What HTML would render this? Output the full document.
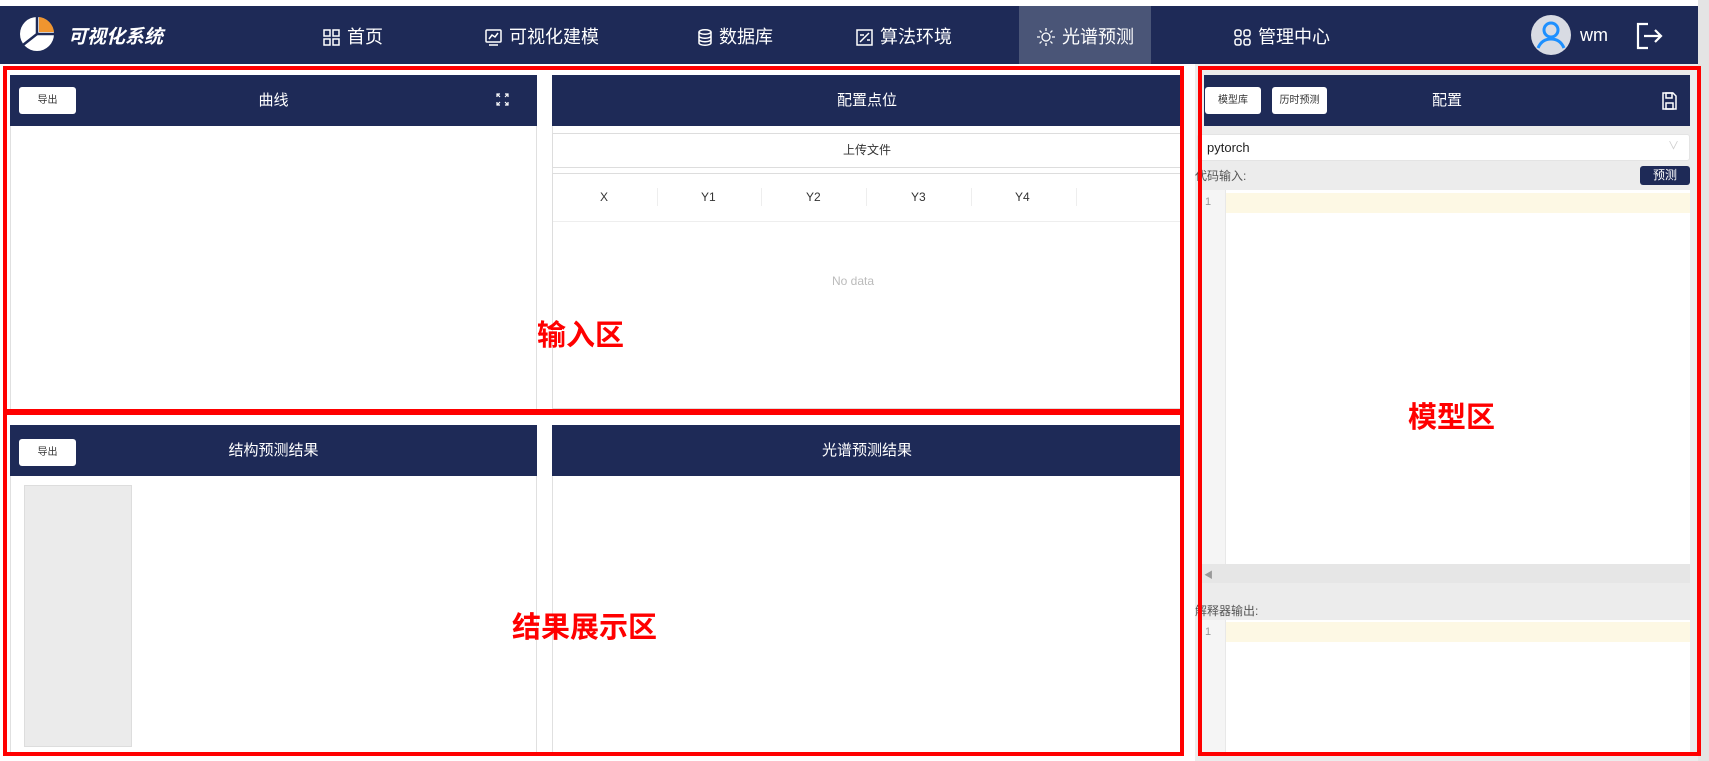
<!DOCTYPE html>
<html><head><meta charset="utf-8"><style>
*{box-sizing:border-box;margin:0;padding:0}
body{width:1709px;height:761px;overflow:hidden;background:#fff;font-family:"Liberation Sans","Noto Sans CJK SC",sans-serif;position:relative}
.a{position:absolute}
.nav{left:0;top:6px;width:1698px;height:58px;background:#1e2a57;color:#fff}
.ni{position:absolute;top:2px;height:58px;line-height:58px;font-size:18px;color:#fff;display:flex;align-items:center;gap:7px}
.hd{background:#1e2a57;color:#fff;font-size:15px;text-align:center;line-height:51px}
.btn{position:absolute;background:#fff;color:#333;font-size:10px;border-radius:3px;text-align:center;line-height:27px;height:27px}
.red{position:absolute;border:4px solid #f00}
.lab{position:absolute;color:#f00;font-size:29px;font-weight:bold}
</style></head><body>
<div class="a" style="left:1195px;top:64px;width:503px;height:697px;background:#ececec"></div>
<div class="a" style="left:1698px;top:0;width:11px;height:761px;background:#e4e4e4"></div>
<div class="a nav">
<svg class="a" style="left:19px;top:10px" width="36" height="36" viewBox="0 0 36 36"><circle cx="18" cy="18" r="17" fill="#fff"/><path d="M20 1A17 17 0 0 1 35 16H20Z" fill="#f0952f"/><path d="M18 18L35 18" stroke="#1e2a57" stroke-width="2.5"/><path d="M18 1V18L4 29" stroke="#1e2a57" stroke-width="2.5" fill="none"/></svg>
<div class="a" style="left:68px;top:16px;font-size:19px;font-weight:bold;font-style:italic;color:#fff">可视化系统</div>
<div class="ni" style="left:323px"><svg width="17" height="17" viewBox="0 0 17 17" fill="none" stroke="#fff" stroke-width="1.5"><rect x="1" y="1" width="6" height="6"/><rect x="10" y="1" width="6" height="6"/><rect x="1" y="10" width="6" height="6"/><rect x="10" y="10" width="6" height="6"/></svg>首页</div>
<div class="ni" style="left:485px"><svg width="17" height="17" viewBox="0 0 17 17" fill="none" stroke="#fff" stroke-width="1.5"><rect x="1" y="1" width="15" height="12" rx="1"/><path d="M4 10l3-4 3 2 3-4M4 16h9"/></svg>可视化建模</div>
<div class="ni" style="left:698px"><svg width="14" height="17" viewBox="0 0 14 17" fill="none" stroke="#fff" stroke-width="1.5"><ellipse cx="7" cy="3" rx="6" ry="2.2"/><path d="M1 3v11c0 1.2 2.7 2.2 6 2.2s6-1 6-2.2V3M1 7c0 1.2 2.7 2.2 6 2.2s6-1 6-2.2M1 10.5c0 1.2 2.7 2.2 6 2.2s6-1 6-2.2"/></svg>数据库</div>
<div class="ni" style="left:856px"><svg width="17" height="17" viewBox="0 0 17 17" fill="none" stroke="#fff" stroke-width="1.5"><rect x="1" y="1" width="15" height="15"/><path d="M4 13L13 4M4 6h4M11 11h3"/></svg>算法环境</div>
<div class="a" style="left:1019px;top:0;width:132px;height:58px;background:#4a5577"></div>
<div class="ni" style="left:1037px"><svg width="18" height="18" viewBox="0 0 18 18" fill="none" stroke="#fff" stroke-width="1.3"><circle cx="9" cy="9" r="4"/><path d="M9 0v3M9 15v3M0 9h3M15 9h3M2.6 2.6l2 2M13.4 13.4l2 2M2.6 15.4l2-2M13.4 4.6l2-2"/></svg>光谱预测</div>
<div class="ni" style="left:1234px"><svg width="17" height="17" viewBox="0 0 17 17" fill="none" stroke="#fff" stroke-width="1.5"><rect x="1" y="1" width="6" height="6" rx="2"/><rect x="10" y="1" width="6" height="6" rx="2"/><rect x="1" y="10" width="6" height="6" rx="2"/><rect x="10" y="10" width="6" height="6" rx="2"/></svg>管理中心</div>
<svg class="a" style="left:1531px;top:9px" width="40" height="40" viewBox="0 0 40 40"><circle cx="20" cy="20" r="20" fill="#d8dbe3"/><circle cx="20" cy="15" r="7" fill="none" stroke="#1e90ff" stroke-width="3"/><path d="M7 33c3-7 8-9 13-9s10 2 13 9" fill="none" stroke="#1e90ff" stroke-width="3"/></svg>
<div class="a" style="left:1580px;top:19px;font-size:18px;color:#fff">wm</div>
<svg class="a" style="left:1636px;top:16px" width="28" height="28" viewBox="0 0 28 28" fill="none" stroke="#fff" stroke-width="2.2"><path d="M12 2H2v24h10M8 14h17M19 8l6 6-6 6"/></svg>
</div>

<!-- input area -->
<div class="a" style="left:10px;top:75px;width:527px;height:335px;background:#fff;border:1px solid #e0e0e0"></div>
<div class="a hd" style="left:10px;top:75px;width:527px;height:51px">曲线</div>
<div class="btn" style="left:19px;top:87px;width:57px">导出</div>
<svg class="a" style="left:496px;top:93px" width="13" height="13" viewBox="0 0 13 13" fill="none" stroke="#fff" stroke-width="1.2"><path d="M1 4V1h3M9 1h3v3M12 9v3H9M4 12H1V9M1 1l3 3M12 1L9 4M12 12L9 9M1 12l3-3"/></svg>
<div class="a" style="left:552px;top:75px;width:630px;height:335px;background:#fff;border:1px solid #e0e0e0"></div>
<div class="a hd" style="left:552px;top:75px;width:630px;height:51px">配置点位</div>
<div class="a" style="left:552px;top:133px;width:630px;height:35px;border:1px solid #ddd;background:#fff;font-size:12px;color:#333;text-align:center;line-height:33px">上传文件</div>
<div class="a" style="left:552px;top:173px;width:630px;height:236px;border:1px solid #ddd;background:#fff"></div>
<div class="a" style="left:553px;top:221px;width:628px;height:1px;background:#eee"></div>
<div class="a" style="left:553px;top:190px;width:628px;font-size:12px;color:#333">
<span class="a" style="left:47px">X</span><span class="a" style="left:148px">Y1</span><span class="a" style="left:253px">Y2</span><span class="a" style="left:358px">Y3</span><span class="a" style="left:462px">Y4</span>
<span class="a" style="left:104px;top:-2px;width:1px;height:18px;background:#eee"></span><span class="a" style="left:208px;top:-2px;width:1px;height:18px;background:#eee"></span><span class="a" style="left:313px;top:-2px;width:1px;height:18px;background:#eee"></span><span class="a" style="left:418px;top:-2px;width:1px;height:18px;background:#eee"></span><span class="a" style="left:523px;top:-2px;width:1px;height:18px;background:#eee"></span></div>
<div class="a" style="left:832px;top:274px;font-size:12px;color:#bbb">No data</div>

<!-- result area -->
<div class="a" style="left:10px;top:425px;width:527px;height:329px;background:#fff;border:1px solid #e0e0e0"></div>
<div class="a hd" style="left:10px;top:425px;width:527px;height:51px">结构预测结果</div>
<div class="btn" style="left:19px;top:439px;width:57px">导出</div>
<div class="a" style="left:24px;top:485px;width:108px;height:262px;background:#ebebeb;border:1px solid #ddd"></div>
<div class="a" style="left:552px;top:425px;width:630px;height:329px;background:#fff;border:1px solid #e0e0e0"></div>
<div class="a hd" style="left:552px;top:425px;width:630px;height:51px">光谱预测结果</div>

<!-- model area -->
<div class="a hd" style="left:1204px;top:75px;width:486px;height:51px">配置</div>
<div class="btn" style="left:1205px;top:87px;width:56px">模型库</div>
<div class="btn" style="left:1272px;top:87px;width:55px">历时预测</div>
<svg class="a" style="left:1662px;top:92px" width="15" height="18" viewBox="0 0 15 18" fill="none" stroke="#fff" stroke-width="1.5"><path d="M1 1h10l3 3v13H1Z"/><rect x="4" y="1" width="6" height="5"/><rect x="4" y="11" width="7" height="6"/></svg>
<div class="a" style="left:1197px;top:134px;width:493px;height:27px;background:#fff;border:1px solid #e4e4e4;border-radius:3px;font-size:13px;color:#222;line-height:25px;padding-left:9px">pytorch<span style="position:absolute;right:10px;top:-1px;color:#ccc;font-size:11px">&#8744;</span></div>
<div class="a" style="left:1195px;top:167px;font-size:12px;color:#555">代码输入:</div>
<div class="a" style="left:1640px;top:166px;width:50px;height:19px;background:#1e2a57;border-radius:3px;color:#fff;font-size:12px;text-align:center;line-height:19px">预测</div>
<div class="a" style="left:1199px;top:190px;width:491px;height:374px;background:#fff"></div>
<div class="a" style="left:1199px;top:190px;width:27px;height:374px;background:#f5f5f5;border-right:1px solid #e8e8e8"></div>
<div class="a" style="left:1226px;top:193px;width:464px;height:20px;background:#fdf8e4"></div>
<div class="a" style="left:1205px;top:196px;font-size:11px;color:#999">1</div>
<div class="a" style="left:1199px;top:564px;width:491px;height:19px;background:#e6e6e6"></div>
<div class="a" style="left:1204px;top:568px;font-size:9px;color:#999">◀</div>
<div class="a" style="left:1195px;top:602px;font-size:12px;color:#555">解释器输出:</div>
<div class="a" style="left:1199px;top:620px;width:491px;height:134px;background:#fff"></div>
<div class="a" style="left:1199px;top:620px;width:27px;height:134px;background:#f5f5f5;border-right:1px solid #e8e8e8"></div>
<div class="a" style="left:1226px;top:622px;width:464px;height:20px;background:#fdf8e4"></div>
<div class="a" style="left:1205px;top:626px;font-size:11px;color:#999">1</div>

<div class="red" style="left:3px;top:66px;width:1181px;height:347px"></div>
<div class="red" style="left:3px;top:411px;width:1181px;height:345px"></div>
<div class="red" style="left:1198px;top:66px;width:503px;height:690px"></div>
<div class="lab" style="left:537px;top:312px">输入区</div>
<div class="lab" style="left:512px;top:604px">结果展示区</div>
<div class="lab" style="left:1408px;top:394px">模型区</div>
</body></html>
